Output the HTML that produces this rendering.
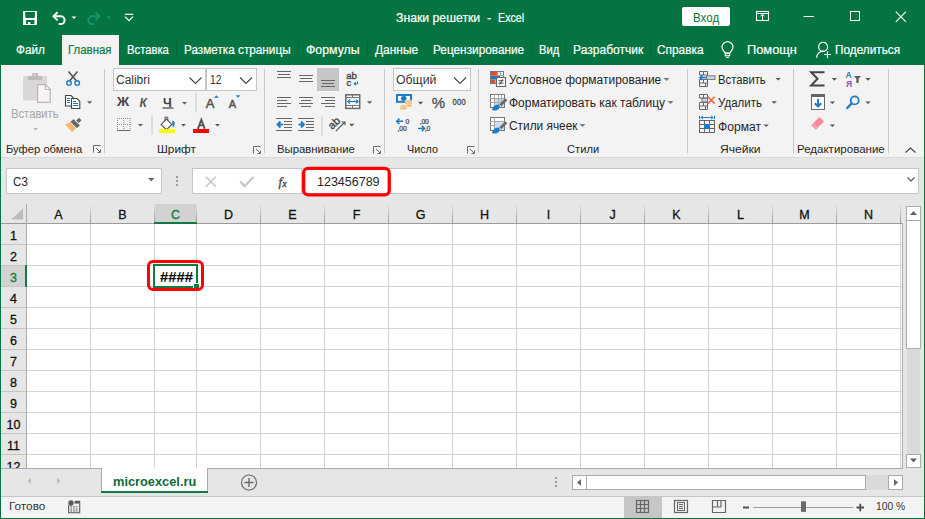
<!DOCTYPE html>
<html><head><meta charset="utf-8">
<style>
*{box-sizing:border-box}
html,body{margin:0;padding:0;width:925px;height:519px;overflow:hidden;background:#e6e6e6;font-family:"Liberation Sans",sans-serif}
.a{position:absolute}
.t{position:absolute;white-space:nowrap;line-height:20px;height:20px;transform-origin:0 0}
.w{-webkit-text-stroke:0.2px currentColor}
svg{position:absolute;overflow:visible}
.sep{position:absolute;width:1px;background:#c8c8c8}
.dd{position:absolute;width:0;height:0;border-left:3px solid transparent;border-right:3px solid transparent;border-top:3px solid #5a5a5a}
.launch{position:absolute;width:8px;height:8px}
.vl{position:absolute;top:224px;width:1px;height:244px;background:#d4d4d4}
.hl{position:absolute;left:27px;width:875px;height:1px;background:#d4d4d4}
.rn{position:absolute;left:1px;width:25px;text-align:center;font-size:12.5px;line-height:20px;color:#111;-webkit-text-stroke:0.3px currentColor}
.cn{position:absolute;top:204px;text-align:center;font-size:12.5px;line-height:20px;color:#111;-webkit-text-stroke:0.3px currentColor}
.hs{position:absolute;top:204px;width:1px;height:19px;background:linear-gradient(#e6e6e6,#b4b4b4 60%,#9b9b9b)}
</style></head><body>
<!-- green top -->
<div class="a" style="left:0;top:0;width:925px;height:65px;background:#047440"></div>
<div class="a" style="left:0;top:0;width:1px;height:519px;background:#047440"></div>
<div class="a" style="left:924px;top:0;width:1px;height:519px;background:#047440"></div>
<div class="a" style="left:0;top:518px;width:925px;height:1px;background:#047440"></div>
<!-- tab separators -->
<div class="a" style="left:176px;top:39px;width:1px;height:22px;background:#0a6a39"></div>
<div class="a" style="left:298px;top:39px;width:1px;height:22px;background:#0a6a39"></div>
<div class="a" style="left:367px;top:39px;width:1px;height:22px;background:#0a6a39"></div>
<div class="a" style="left:425px;top:39px;width:1px;height:22px;background:#0a6a39"></div>
<div class="a" style="left:531px;top:39px;width:1px;height:22px;background:#0a6a39"></div>
<div class="a" style="left:565px;top:39px;width:1px;height:22px;background:#0a6a39"></div>
<div class="a" style="left:650px;top:39px;width:1px;height:22px;background:#0a6a39"></div>
<div class="a" style="left:710px;top:39px;width:1px;height:22px;background:#0a6a39"></div>
<!-- active tab -->
<div class="a" style="left:62px;top:35px;width:57px;height:30px;background:#f3f3f3"></div>
<!-- Вход button -->
<div class="a" style="left:682px;top:7px;width:48px;height:19px;background:#fff;border-radius:2px"></div>
<!-- QAT icons -->
<svg style="left:0;top:0" width="925" height="65">
 <!-- save -->
 <path fill="#fff" fill-rule="evenodd" d="M23 11h14v14h-14z M25.2 12h9.7v4.9l-1 1h-7.7l-1-1z M26.1 20.1h8.3v3.8h-4.1v-1.9h-2.3v1.9h-1.9z"/>
 <!-- undo -->
 <path d="M53.5 16.3 h7.2 a3.9 3.9 0 0 1 0 7.8 h-2" fill="none" stroke="#fff" stroke-width="2"/>
 <path d="M57.6 12.2 l-4.1 4.1 l4.1 4.1" fill="none" stroke="#fff" stroke-width="2"/>
 <path d="M71.5 16.5h5l-2.5 2.6z" fill="#fff"/>
 <!-- redo (disabled) -->
 <path d="M99.5 16.3 h-7.2 a3.9 3.9 0 0 0 0 7.8 h2" fill="none" stroke="#16946a" stroke-width="2"/>
 <path d="M95.4 12.2 l4.1 4.1 l-4.1 4.1" fill="none" stroke="#16946a" stroke-width="2"/>
 <path d="M106.3 16.5h5l-2.5 2.6z" fill="#1a9a6a"/>
 <!-- customize -->
 <path d="M124.8 14.3h8.4" stroke="#fff" stroke-width="1.2"/>
 <path d="M125 16.6l4 4 4-4" fill="none" stroke="#fff" stroke-width="1.2"/>
 <!-- ribbon display options -->
 <rect x="756.5" y="11.5" width="12" height="9" fill="none" stroke="#fff" stroke-width="1.1"/>
 <path d="M757 13.5h11.5" stroke="#fff" stroke-width="1"/>
 <path d="M762.5 14.2v6.5M760.3 16.4l2.2-2.2 2.2 2.2" fill="none" stroke="#fff" stroke-width="1"/>
 <!-- minimize -->
 <path d="M803.5 16.5h10.5" stroke="#fff" stroke-width="1"/>
 <!-- maximize -->
 <rect x="850.5" y="11.5" width="9" height="9" fill="none" stroke="#fff" stroke-width="1.05"/>
 <!-- close -->
 <path d="M895.8 11.6l10.2 10.2M906 11.6l-10.2 10.2" stroke="#fff" stroke-width="1.05"/>
 <!-- lightbulb -->
 <g fill="none" stroke="#fff" stroke-width="1.2">
  <path d="M725.3 53.2L722.9 49.8A5.35 5.35 0 1 1 732.1 49.8L729.7 53.2z"/>
  <rect x="725.3" y="53.4" width="4.4" height="2.3"/>
  <path d="M726 57.5h3"/>
 </g>
 <!-- share person -->
 <g fill="none" stroke="#fff" stroke-width="1.2">
  <circle cx="823.1" cy="46.8" r="4.5"/>
  <path d="M816.6 57.8c0-3.8 3-6.6 6.5-6.6h2"/>
  <path d="M824.1 54.5h6.8M827.5 51.2v6.7"/>
 </g>
</svg>
<!-- ribbon -->
<div class="a" style="left:1px;top:65px;width:923px;height:92px;background:#f3f3f3"></div>
<div class="a" style="left:1px;top:157px;width:923px;height:1px;background:#d9d9d9"></div>
<!-- group separators -->
<div class="sep" style="left:104px;top:69px;height:84px"></div>
<div class="sep" style="left:264px;top:69px;height:84px"></div>
<div class="sep" style="left:384px;top:69px;height:84px"></div>
<div class="sep" style="left:478px;top:69px;height:84px"></div>
<div class="sep" style="left:687px;top:69px;height:84px"></div>
<div class="sep" style="left:793px;top:69px;height:84px"></div>
<div class="sep" style="left:888px;top:69px;height:84px"></div>
<!-- font combos -->
<div class="a" style="left:113px;top:68px;width:93px;height:23px;background:#fff;border:1px solid #c6c6c6"></div>
<div class="a" style="left:206px;top:68px;width:51px;height:23px;background:#fff;border:1px solid #c6c6c6"></div>
<div class="a" style="left:393px;top:68px;width:78px;height:23px;background:#fff;border:1px solid #c6c6c6"></div>
<!-- bottom-align selected -->
<div class="a" style="left:317px;top:68px;width:22px;height:23px;background:#c6c6c6"></div>
<div class="a" style="left:624px;top:497px;width:38px;height:21px;background:#c6c6c6"></div>
<svg style="left:0;top:0" width="925" height="160" id="ribbon">
 <!-- ===== Clipboard ===== -->
 <!-- paste -->
 <g>
  <rect x="23" y="76" width="24" height="24.5" rx="2" fill="#d9d5d9"/>
  <rect x="28" y="76" width="14" height="4" rx="0.5" fill="#bdb8bd"/>
  <path d="M32.3 73h5.7v3.5h-5.7z" fill="#bdb8bd"/>
  <rect x="34" y="74.2" width="2.2" height="1.5" fill="#d9d5d9"/>
  <path d="M37.6 84.6h8l4.6 4.6v13.2h-12.6z" fill="#f7f3f7" stroke="#b9b5b9" stroke-width="1.2"/>
  <path d="M45.3 84.6v4.9h4.9" fill="none" stroke="#b9b5b9" stroke-width="1.1"/>
 </g>
 <path d="M33 128h5.2l-2.6 2.6z" fill="#b8b8b8"/>
 <!-- cut -->
 <g fill="none">
  <path d="M68.5 71.5l8 9.5M77.5 71.5l-8 9.5" stroke="#555" stroke-width="1.6"/>
  <circle cx="69" cy="83.1" r="2.3" stroke="#1e7bc4" stroke-width="1.4"/>
  <circle cx="77.2" cy="83.1" r="2.3" stroke="#1e7bc4" stroke-width="1.4"/>
 </g>
 <!-- copy -->
 <g stroke="#444" stroke-width="1.1">
  <path d="M65.5 95.5h5.5l2.5 2.5v8h-8z" fill="#fff"/>
  <path d="M71.5 98.5h5.5l2.8 2.8v7.2h-8.3z" fill="#fff"/>
 </g>
 <path d="M67 98.5h3M67 100.5h3M67 102.5h3M73 101.5h3M73 103.5h5M73 105.5h5" stroke="#1e7bc4" stroke-width="1"/>
 <path d="M87 101.2h5.2l-2.6 2.6z" fill="#555"/>
 <!-- format painter -->
 <path d="M65 124.6L70.2 122.3 75.9 128 72.3 132.2z" fill="#f4b76f"/>
 <path d="M70.8 121.8L73.5 119.4 79.6 125.4 76.9 127.8z" fill="#666" stroke="#666" stroke-width="0.6" stroke-linejoin="round"/>
 <path d="M76.6 120.6L79 117.9 81.3 120.2 78.7 122.7z" fill="#666" stroke="#666" stroke-width="0.5" stroke-linejoin="round"/>
 <!-- launcher -->
 <g fill="none" stroke="#6a6a6a" stroke-width="1">
  <path d="M93.5 152.5v-7h7"/>
  <path d="M96 148l4 4M100.5 149.5v3h-3"/>
 </g>
 <!-- ===== Font ===== -->
 <path d="M189.5 77.5l6 6 6-6" fill="none" stroke="#444" stroke-width="1.1"/>
 <path d="M240 77.5l6 6 6-6" fill="none" stroke="#444" stroke-width="1.1"/>
 <text x="117" y="106.5" font-family="Liberation Sans" font-weight="bold" font-size="12" fill="#444" transform="translate(117 106.5) scale(1.12 1) translate(-117 -106.5)">Ж</text>
 <text x="139.6" y="106.5" font-family="Liberation Sans" font-weight="bold" font-style="italic" font-size="12" fill="#555">К</text>
 <text x="163" y="106.5" font-family="Liberation Sans" font-weight="bold" font-size="12.5" fill="#404040">Ч</text>
 <path d="M162.5 108h11" stroke="#404040" stroke-width="1.2"/>
 <path d="M182 102h5l-2.5 2.5z" fill="#5a5a5a"/>
 <rect x="195.5" y="92.5" width="1" height="20" fill="#c8c8c8"/>
 <text x="205.8" y="108" font-family="Liberation Sans" font-size="13" fill="#555" stroke="#555" stroke-width="0.5">A</text>
 <path d="M213.8 97.8l2.5-2.6 2.5 2.6z" fill="#2a7cc7"/>
 <text x="228.8" y="108" font-family="Liberation Sans" font-size="11" fill="#555" stroke="#555" stroke-width="0.5">A</text>
 <path d="M235.5 95.2h5l-2.5 2.6z" fill="#2a7cc7"/>
 <!-- borders -->
 <g fill="#6a6a6a">
  <path d="M117 130h13.5v1h-13.5z"/>
 </g>
 <g fill="none" stroke="#8a8a8a" stroke-width="1" stroke-dasharray="1 1">
  <path d="M117.5 118v12M130 118v12M117 118.5h13M117 124.5h13M123.7 118v12"/>
 </g>
 <path d="M138 124h5l-2.5 2.5z" fill="#5a5a5a"/>
 <rect x="151.5" y="115" width="1" height="20" fill="#c8c8c8"/>
 <!-- fill color -->
 <path d="M161.2 124.4l5.3-5.3 5.3 5.3-5.3 5.3z" fill="#fff" stroke="#555" stroke-width="1.1"/>
 <path d="M165 121.3v-4.2h2.8v3.8" fill="none" stroke="#555" stroke-width="1"/>
 <path d="M172.3 120.5c1.9 0.2 2.9 2 2.3 4-0.3 1.1-0.9 2.1-1.6 3.3-0.4-1.6-0.8-3.2-0.7-7.3z" fill="#1e7bc4"/>
 <rect x="159" y="129" width="16" height="4" fill="#ffff00"/>
 <path d="M181 124h5l-2.5 2.5z" fill="#5a5a5a"/>
 <!-- font color -->
 <path d="M197.9 128.8L201.35 119.7 204.8 128.8M199.1 125.4h4.5" fill="none" stroke="#555" stroke-width="1.9"/>
 <rect x="193" y="129" width="16" height="4" fill="#ff0000"/>
 <path d="M215 124h5l-2.5 2.5z" fill="#5a5a5a"/>
 <g fill="none" stroke="#6a6a6a" stroke-width="1">
  <path d="M253.5 153.5v-7h7"/>
  <path d="M256 149l4 4M260.5 150.5v3h-3"/>
 </g>
 <!-- ===== Alignment ===== -->
 <g stroke="#666" stroke-width="1.1">
  <path d="M277 71.5h14M278 74.5h12M277 77.5h14"/>
  <path d="M299 75.5h14M300 78.5h12M299 81.5h14"/>
  <path d="M321 80.5h14M322 83.5h12M321 86.5h14"/>
  <path d="M277 97.5h14M277 100.5h10M277 103.5h14M277 106.5h10"/>
  <path d="M299 97.5h14M301 100.5h10M299 103.5h14M301 106.5h10"/>
  <path d="M321 97.5h14M325 100.5h10M321 103.5h14M325 106.5h10"/>
  <path d="M276 118.5h16M284 121.5h8M284 124.5h8M284 127.5h8M276 130.5h16"/>
  <path d="M298 118.5h16M306 121.5h8M306 124.5h8M306 127.5h8M298 130.5h16"/>
 </g>
 <path d="M277.5 124.5h5.5M280.5 121.5l-3 3 3 3" fill="none" stroke="#1e7bc4" stroke-width="1.8"/>
 <path d="M298.5 124.5h5.5M301 121.5l3 3-3 3" fill="none" stroke="#1e7bc4" stroke-width="1.8"/>
 <text x="346.3" y="78.8" font-family="Liberation Sans" font-size="9.5" fill="#444" stroke="#444" stroke-width="0.35" letter-spacing="-0.2">ab</text>
 <text x="346.5" y="86.2" font-family="Liberation Sans" font-size="9.5" fill="#444" stroke="#444" stroke-width="0.35">c</text>
 <path d="M357.6 81.2v2.6h-3.4M355.7 82.3l-1.5 1.5 1.5 1.5" fill="none" stroke="#1e7bc4" stroke-width="1.1"/>
 <!-- merge -->
 <rect x="345.8" y="94.8" width="13.9" height="13.6" fill="#fff" stroke="#666" stroke-width="1.5"/>
 <path d="M345.8 97.5h13.9M345.8 105.5h13.9M352.5 94.8v2.7M352.5 105.5v2.9" stroke="#777" stroke-width="1"/>
 <path d="M348 101.5h10" stroke="#1e7bc4" stroke-width="1.2"/>
 <path d="M350 99.3l-2.2 2.2 2.2 2.2M356 99.3l2.2 2.2-2.2 2.2" fill="none" stroke="#1e7bc4" stroke-width="1.2"/>
 <path d="M367 101.2h5.2l-2.6 2.6z" fill="#555"/>
 <rect x="321.5" y="115.5" width="1" height="20" fill="#c8c8c8"/>
 <!-- orientation -->
 <text x="0" y="0" font-family="Liberation Sans" font-size="11" fill="#444" stroke="#444" stroke-width="0.35" transform="translate(332.3 130) rotate(-45)">ab</text>
 <path d="M335.8 131.2l9.2-9.2M341.8 122h3.2v3.2" fill="none" stroke="#555" stroke-width="1.1"/>
 <path d="M349.2 123.8h5.2l-2.6 2.6z" fill="#555"/>
 <g fill="none" stroke="#6a6a6a" stroke-width="1">
  <path d="M373.5 153.5v-7h7"/>
  <path d="M376 149l4 4M380.5 150.5v3h-3"/>
 </g>
 <!-- ===== Number ===== -->
 <path d="M454 77.5l6 6 6-6" fill="none" stroke="#444" stroke-width="1.1"/>
 <!-- currency -->
 <rect x="396" y="94" width="16" height="8.8" fill="#1e7bc4"/>
 <rect x="398" y="96" width="12" height="4.8" fill="#fff"/>
 <path d="M404 96.2a2.4 2.4 0 1 0 0.1 4.6z" fill="#1e7bc4"/>
 <circle cx="404.3" cy="98.4" r="2.3" fill="#1e7bc4"/>
 <g fill="#f4b76f" stroke="#f3f3f3" stroke-width="0.6">
  <ellipse cx="408.6" cy="101.6" rx="3.6" ry="1.5"/>
  <ellipse cx="408.6" cy="103.6" rx="3.6" ry="1.5"/>
  <ellipse cx="408.6" cy="105.6" rx="3.6" ry="1.5"/>
  <ellipse cx="403.5" cy="106.2" rx="3.6" ry="1.5"/>
  <ellipse cx="403.5" cy="108.3" rx="3.6" ry="1.5"/>
 </g>
 <path d="M418 101.8h5.2l-2.6 2.6z" fill="#555"/>
 <text x="431.8" y="108" font-family="Liberation Sans" font-size="15" fill="#505050" stroke="#505050" stroke-width="0.3">%</text>
 <text x="0" y="0" transform="translate(452.6 104.8) scale(0.82 1)" font-family="Liberation Sans" font-size="9.2" fill="#404040" stroke="#404040" stroke-width="0.3" letter-spacing="0.3">000</text>
 <text x="0" y="0" transform="translate(405.6 123.6) scale(0.85 1)" font-family="Liberation Sans" font-size="8" fill="#404040" stroke="#404040" stroke-width="0.25">0</text>
 <text x="0" y="0" transform="translate(397.6 131) scale(0.85 1)" font-family="Liberation Sans" font-size="8" fill="#404040" stroke="#404040" stroke-width="0.25" letter-spacing="-0.2">,00</text>
 <path d="M396.5 121.3h6.5M399.5 118.6l-2.8 2.7 2.8 2.7" fill="none" stroke="#1e7bc4" stroke-width="1.5"/>
 <text x="0" y="0" transform="translate(419.8 124) scale(0.85 1)" font-family="Liberation Sans" font-size="8" fill="#404040" stroke="#404040" stroke-width="0.25" letter-spacing="-0.2">,00</text>
 <text x="0" y="0" transform="translate(424.8 131) scale(0.85 1)" font-family="Liberation Sans" font-size="8" fill="#404040" stroke="#404040" stroke-width="0.25" letter-spacing="-0.2">,0</text>
 <path d="M418 128.6h6.5M421.8 125.9l2.8 2.7-2.8 2.7" fill="none" stroke="#1e7bc4" stroke-width="1.5"/>
 <g fill="none" stroke="#6a6a6a" stroke-width="1">
  <path d="M467.5 153.5v-7h7"/>
  <path d="M470 149l4 4M474.5 150.5v3h-3"/>
 </g>
 <!-- ===== Styles ===== -->
 <!-- conditional formatting -->
 <rect x="490.5" y="71.5" width="13" height="12" fill="#fff" stroke="#777" stroke-width="1"/>
 <path d="M490.5 75.5h13M490.5 79.5h13M497.5 71.5v4M500.5 71.5v4" stroke="#aaa" stroke-width="1"/>
 <rect x="491" y="72" width="6" height="3.5" fill="#ea4a2a"/>
 <rect x="491" y="76" width="9" height="3.4" fill="#1e7bc4"/>
 <rect x="491" y="80" width="4.5" height="3" fill="#ea4a2a"/>
 <rect x="496.5" y="77.5" width="9" height="9" fill="#fff" stroke="#666" stroke-width="1.1"/>
 <path d="M498.5 80.8h5M498.5 83.2h5M502.6 79.2l-3 5.6" stroke="#333" stroke-width="0.9"/>
 <!-- format as table -->
 <rect x="490.5" y="94.5" width="14" height="13" fill="#fff" stroke="#777" stroke-width="1"/>
 <rect x="495" y="99" width="9" height="8" fill="#c9ddf0"/>
 <path d="M490.5 98.5h14M490.5 102.5h14M494.5 94.5v13M498.5 94.5v13M501.5 94.5v13" stroke="#aaa" stroke-width="1"/>
 <path d="M499.3 104.2l6-6 2 2-6 6z" fill="#6a6a6a"/>
 <path d="M492 110c0.5-2.5 2.5-5.5 6.5-5.5l1.2 1.2c0 4-3 6-7.7 4.3z" fill="#1e7bc4"/>
 <!-- cell styles -->
 <rect x="490.5" y="117.5" width="14" height="13" fill="#fff" stroke="#777" stroke-width="1"/>
 <rect x="495" y="122" width="9" height="8" fill="#c9ddf0"/>
 <path d="M490.5 121.5h14M494.5 117.5v13M490.5 125.5h4" stroke="#aaa" stroke-width="1"/>
 <path d="M499.3 127.2l6-6 2 2-6 6z" fill="#6a6a6a"/>
 <path d="M492 133c0.5-2.5 2.5-5.5 6.5-5.5l1.2 1.2c0 4-3 6-7.7 4.3z" fill="#1e7bc4"/>
 <path d="M663.5 78h6l-3 3z" fill="#7a7a7a"/>
 <path d="M667.5 101h6l-3 3z" fill="#7a7a7a"/>
 <path d="M579.5 124h6l-3 3z" fill="#7a7a7a"/>
 <!-- ===== Cells ===== -->
 <g fill="none" stroke="#666" stroke-width="1">
  <path d="M699.5 71.5h8v3.5h-8zM703.5 71.5v3.5"/>
  <path d="M699.5 79.5h8v7h-8zM699.5 83h8M703.5 79.5v3.5M705.5 83v3.5"/>
 </g>
 <rect x="706.5" y="75.8" width="8.5" height="3.6" fill="#c5dcf0" stroke="#777" stroke-width="1"/>
 <path d="M706 77.6h-6M702.4 75.2l-2.4 2.4 2.4 2.4" fill="none" stroke="#1e7bc4" stroke-width="1.5"/>
 <path d="M775.5 78h5.3l-2.65 2.6z" fill="#555"/>
 <!-- delete -->
 <g fill="none" stroke="#666" stroke-width="1">
  <path d="M699.5 94.5h8v3.5h-8zM703.5 94.5v3.5"/>
  <path d="M699.5 102.5h8v7h-8zM699.5 106h8M703.5 102.5v3.5M705.5 106v3.5"/>
 </g>
 <rect x="702" y="98.3" width="5.5" height="3.6" fill="#c5dcf0" stroke="#777" stroke-width="1"/>
 <path d="M707.8 96.8l6.8 6.8M714.6 96.8l-6.8 6.8" stroke="#ec6a4a" stroke-width="1.6"/>
 <path d="M771.5 101.2h5.3l-2.65 2.6z" fill="#555"/>
 <!-- format -->
 <g fill="none" stroke="#666" stroke-width="1">
  <rect x="699.5" y="120.5" width="15" height="12"/>
  <path d="M699.5 124.5h15M699.5 128.5h15M704.5 120.5v12M709.5 120.5v12"/>
 </g>
 <rect x="704" y="124" width="6" height="5" fill="#1e7bc4"/>
 <path d="M700.5 117.5h13" stroke="#1e7bc4" stroke-width="1"/>
 <path d="M699.5 115.8v3.4M714.5 115.8v3.4" stroke="#1e7bc4" stroke-width="1"/>
 <path d="M703 115.8l-2 1.7 2 1.7M711 115.8l2 1.7-2 1.7" fill="none" stroke="#1e7bc4" stroke-width="1"/>
 <path d="M763.5 124.5h5.3l-2.65 2.6z" fill="#555"/>
 <!-- ===== Editing ===== -->
 <path d="M824.5 72.2h-13.3l6.3 6.6-6.3 6.6h13.3" fill="none" stroke="#444" stroke-width="2"/>
 <path d="M831.7 78.1h5.3l-2.65 2.6z" fill="#555"/>
 <text x="845.6" y="77.9" font-family="Liberation Sans" font-weight="bold" font-size="8.5" fill="#1e7bc4">A</text>
 <text x="846" y="86.9" font-family="Liberation Sans" font-weight="bold" font-size="8.5" fill="#8b4fb3">Я</text>
 <path d="M854 76.1h7l-2.4 2.6v4.2h-2.2v-4.2z" fill="#5a5a5a"/>
 <path d="M865.3 78.1h5.3l-2.65 2.6z" fill="#555"/>
 <!-- fill -->
 <rect x="811.5" y="94.5" width="13" height="15" fill="#fff" stroke="#666" stroke-width="1"/>
 <rect x="811" y="94" width="14" height="3" fill="#666"/>
 <path d="M818 99v7M814.8 103.3l3.2 3.2 3.2-3.2" fill="none" stroke="#1e7bc4" stroke-width="2"/>
 <path d="M829.7 101.5h5.3l-2.65 2.6z" fill="#555"/>
 <!-- find -->
 <circle cx="854.7" cy="100.4" r="4" fill="none" stroke="#1e7bc4" stroke-width="1.8"/>
 <path d="M851.8 103.4l-4.6 4.6" stroke="#1e7bc4" stroke-width="2.4" stroke-linecap="round"/>
 <path d="M865.3 101.5h5.3l-2.65 2.6z" fill="#555"/>
 <!-- clear -->
 <path d="M815.8 129.8l-4.6-4.6 8.2-8.2 4.6 4.6z" fill="#f7899b"/>
 <path d="M815.8 129.8l-4.6-4.6 2.4-2.4 4.6 4.6z" fill="#f5a2b0"/>
 <path d="M829.7 124.5h5.3l-2.65 2.6z" fill="#555"/>
 <!-- collapse caret -->
 <path d="M905.5 152.5l5-4.5 5 4.5" fill="none" stroke="#444" stroke-width="1.1"/>
</svg>
<!-- ===== Formula bar ===== -->
<div class="a" style="left:6px;top:168px;width:156px;height:26px;background:#fff;border:1px solid #c6c6c6"></div>
<div class="a" style="left:192px;top:168px;width:727px;height:26px;background:#fff;border:1px solid #c6c6c6"></div>
<svg style="left:0;top:0" width="925" height="200">
 <path d="M148 178h6.5l-3.25 3.5z" fill="#6a6a6a"/>
 <path d="M176 176h2v2h-2zM176 180h2v2h-2zM176 184h2v2h-2z" fill="#9a9a9a"/>
 <path d="M205.8 176.8l10 10M215.8 176.8l-10 10" stroke="#c6c6c6" stroke-width="1.6"/>
 <path d="M240.3 181.6l4.3 4.6 8.8-9.2" fill="none" stroke="#c6c6c6" stroke-width="2.2"/>
 <text x="278.5" y="186" font-family="Liberation Serif" font-style="italic" font-size="13" fill="#404040" stroke="#404040" stroke-width="0.3">f</text>
 <text x="282.3" y="186.5" font-family="Liberation Serif" font-style="italic" font-size="10" fill="#404040" stroke="#404040" stroke-width="0.3">x</text>
 <path d="M907.5 177.5l3.5 3.5 3.5-3.5" fill="none" stroke="#6a6a6a" stroke-width="1.5"/>
 <path d="M301.5 168v26" stroke="#c6c6c6" stroke-width="1"/>
 <rect x="303.65" y="168.45" width="85.6" height="26.4" rx="4.5" fill="none" stroke="#ff0000" stroke-width="3.3"/>
</svg>
<!-- ===== Grid ===== -->
<div class="a" style="left:27px;top:224px;width:875px;height:244px;background:#fff"></div>
<!-- headers -->
<div class="a" style="left:155px;top:204px;width:41px;height:19px;background:#d2d2d2"></div>
<div class="a" style="left:1px;top:266px;width:25px;height:20px;background:#d2d2d2"></div>
<div class="a" style="left:1px;top:223px;width:902px;height:1px;background:#9b9b9b"></div>
<div class="a" style="left:26px;top:204px;width:1px;height:264px;background:#ababab"></div>
<div class="a" style="left:902px;top:223px;width:1px;height:245px;background:#ababab"></div>
<svg style="left:0;top:0" width="30" height="230"><path d="M11 219.5h12v-11z" fill="#bdbdbd"/></svg>
<div class="vl" style="left:90px"></div>
<div class="hs" style="left:90px"></div>
<div class="vl" style="left:154px"></div>
<div class="hs" style="left:154px"></div>
<div class="vl" style="left:196px"></div>
<div class="hs" style="left:196px"></div>
<div class="vl" style="left:260px"></div>
<div class="hs" style="left:260px"></div>
<div class="vl" style="left:324px"></div>
<div class="hs" style="left:324px"></div>
<div class="vl" style="left:388px"></div>
<div class="hs" style="left:388px"></div>
<div class="vl" style="left:452px"></div>
<div class="hs" style="left:452px"></div>
<div class="vl" style="left:516px"></div>
<div class="hs" style="left:516px"></div>
<div class="vl" style="left:580px"></div>
<div class="hs" style="left:580px"></div>
<div class="vl" style="left:644px"></div>
<div class="hs" style="left:644px"></div>
<div class="vl" style="left:708px"></div>
<div class="hs" style="left:708px"></div>
<div class="vl" style="left:772px"></div>
<div class="hs" style="left:772px"></div>
<div class="vl" style="left:836px"></div>
<div class="hs" style="left:836px"></div>
<div class="vl" style="left:900px"></div>
<div class="hs" style="left:900px"></div>
<div class="hl" style="top:244px"></div>
<div class="a" style="left:1px;top:244px;width:25px;height:1px;background:#c6c6c6"></div>
<div class="hl" style="top:265px"></div>
<div class="a" style="left:1px;top:265px;width:25px;height:1px;background:#c6c6c6"></div>
<div class="hl" style="top:286px"></div>
<div class="a" style="left:1px;top:286px;width:25px;height:1px;background:#c6c6c6"></div>
<div class="hl" style="top:307px"></div>
<div class="a" style="left:1px;top:307px;width:25px;height:1px;background:#c6c6c6"></div>
<div class="hl" style="top:328px"></div>
<div class="a" style="left:1px;top:328px;width:25px;height:1px;background:#c6c6c6"></div>
<div class="hl" style="top:349px"></div>
<div class="a" style="left:1px;top:349px;width:25px;height:1px;background:#c6c6c6"></div>
<div class="hl" style="top:370px"></div>
<div class="a" style="left:1px;top:370px;width:25px;height:1px;background:#c6c6c6"></div>
<div class="hl" style="top:391px"></div>
<div class="a" style="left:1px;top:391px;width:25px;height:1px;background:#c6c6c6"></div>
<div class="hl" style="top:412px"></div>
<div class="a" style="left:1px;top:412px;width:25px;height:1px;background:#c6c6c6"></div>
<div class="hl" style="top:433px"></div>
<div class="a" style="left:1px;top:433px;width:25px;height:1px;background:#c6c6c6"></div>
<div class="hl" style="top:454px"></div>
<div class="a" style="left:1px;top:454px;width:25px;height:1px;background:#c6c6c6"></div>
<div class="cn" style="left:27px;width:63px;top:205px;color:#111">A</div>
<div class="cn" style="left:91px;width:63px;top:205px;color:#111">B</div>
<div class="cn" style="left:155px;width:41px;top:205px;color:#107c41">C</div>
<div class="cn" style="left:197px;width:63px;top:205px;color:#111">D</div>
<div class="cn" style="left:261px;width:63px;top:205px;color:#111">E</div>
<div class="cn" style="left:325px;width:63px;top:205px;color:#111">F</div>
<div class="cn" style="left:389px;width:63px;top:205px;color:#111">G</div>
<div class="cn" style="left:453px;width:63px;top:205px;color:#111">H</div>
<div class="cn" style="left:517px;width:63px;top:205px;color:#111">I</div>
<div class="cn" style="left:581px;width:63px;top:205px;color:#111">J</div>
<div class="cn" style="left:645px;width:63px;top:205px;color:#111">K</div>
<div class="cn" style="left:709px;width:63px;top:205px;color:#111">L</div>
<div class="cn" style="left:773px;width:63px;top:205px;color:#111">M</div>
<div class="cn" style="left:837px;width:63px;top:205px;color:#111">N</div>
<div class="rn" style="top:226px;color:#111">1</div>
<div class="rn" style="top:247px;color:#111">2</div>
<div class="rn" style="top:268px;color:#107c41">3</div>
<div class="rn" style="top:289px;color:#111">4</div>
<div class="rn" style="top:310px;color:#111">5</div>
<div class="rn" style="top:331px;color:#111">6</div>
<div class="rn" style="top:352px;color:#111">7</div>
<div class="rn" style="top:373px;color:#111">8</div>
<div class="rn" style="top:394px;color:#111">9</div>
<div class="rn" style="top:415px;color:#111">10</div>
<div class="rn" style="top:436px;color:#111">11</div>
<div class="rn" style="top:457px;color:#111">12</div>
<div class="a" style="left:154px;top:222px;width:43px;height:2px;background:#107c41"></div>
<div class="a" style="left:25px;top:265px;width:2px;height:22px;background:#107c41"></div>
<!-- selection -->
<div class="a" style="left:153px;top:264px;width:45px;height:24px;border:2px solid #107c41"></div>
<div class="a" style="left:193px;top:283px;width:6px;height:6px;background:#107c41;border-left:1px solid #fff;border-top:1px solid #fff"></div>
<div class="a" style="left:147px;top:260px;width:57px;height:31px;border:3px solid #ff0000;border-radius:6px"></div>
<!-- vertical scrollbar -->
<div class="a" style="left:906px;top:206px;width:15px;height:15px;background:#fff;border:1px solid #ababab"></div>
<div class="a" style="left:906px;top:221px;width:15px;height:233px;background:#dadada;border-left:1px solid #e6e6e6;border-right:1px solid #e6e6e6"></div>
<div class="a" style="left:906px;top:220px;width:15px;height:129px;background:#fff;border:1px solid #ababab"></div>
<div class="a" style="left:906px;top:454px;width:15px;height:14px;background:#fff;border:1px solid #ababab"></div>
<svg style="left:0;top:0" width="925" height="519">
 <path d="M910 215h7l-3.5-4z" fill="#606060"/>
 <path d="M910 458.5h7l-3.5 4z" fill="#606060"/>
</svg>
<!-- sheet bar -->
<div class="a" style="left:1px;top:468px;width:923px;height:28px;background:#e6e6e6"></div>
<div class="a" style="left:1px;top:468px;width:101px;height:1px;background:#ababab"></div>
<div class="a" style="left:207px;top:468px;width:696px;height:1px;background:#ababab"></div>
<div class="a" style="left:101px;top:468px;width:107px;height:25px;background:#fff;border-left:1px solid #ababab;border-right:1px solid #ababab"></div>
<div class="a" style="left:101px;top:491px;width:107px;height:2px;background:#107c41"></div>
<div class="a" style="left:1px;top:496px;width:923px;height:1px;background:#c6c6c6"></div>
<div class="a" style="left:1px;top:497px;width:923px;height:21px;background:#f3f3f3"></div>
<div class="a" style="left:624px;top:497px;width:38px;height:21px;background:#c6c6c6"></div>
<svg style="left:0;top:0" width="925" height="519">
 <path d="M31 477.5v7l-3.5-3.5z" fill="#c0c0c0"/>
 <path d="M57 477.5v7l3.5-3.5z" fill="#c0c0c0"/>
 <circle cx="249" cy="482.5" r="7.5" fill="none" stroke="#6a6a6a" stroke-width="1.2"/>
 <path d="M244.5 482.5h9M249 478v9" stroke="#6a6a6a" stroke-width="1.4"/>
 <path d="M555 477h2v2h-2zM555 481h2v2h-2zM555 485h2v2h-2z" fill="#9a9a9a"/>
 <!-- macro icon -->
 <circle cx="71" cy="503" r="2.7" fill="#5a5a5a"/>
 <rect x="74.6" y="500.8" width="5.6" height="2.8" fill="#5a5a5a"/>
 <path d="M68.6 505v7.8h11.1v-9.2" fill="none" stroke="#5a5a5a" stroke-width="1.1"/>
 <path d="M70.3 506.8h8.2M70.3 509h8.2M70.3 511h8.2" stroke="#5a5a5a" stroke-width="1" stroke-dasharray="1.8 0.9"/>
 <!-- view icons -->
 <g fill="none" stroke="#666" stroke-width="1.2">
  <rect x="636.5" y="500.5" width="12" height="12"/>
  <path d="M640.5 500.5v12M644.5 500.5v12M636.5 504.5h12M636.5 508.5h12"/>
  <rect x="674.5" y="500.5" width="13" height="12"/>
 </g>
 <g fill="none" stroke="#666" stroke-width="1">
  <rect x="677.5" y="502.5" width="7" height="8"/>
  <path d="M679 504.5h4M679 506.5h4M679 508.5h4"/>
 </g>
 <g fill="none" stroke="#666" stroke-width="1.2">
  <path d="M712.5 500.5h13v12h-13zM717.5 500.5v6.5M721 500.5v6.5M712.5 507h8.5"/>
 </g>
 <path d="M743 507.5h6" stroke="#505050" stroke-width="2"/>
 <path d="M753 507.5h100" stroke="#a0a0a0" stroke-width="1"/>
 <rect x="801" y="501.3" width="5" height="10.6" fill="#6a6a6a"/>
 <path d="M856.5 507.5h7.5M860.25 503.7v7.6" stroke="#505050" stroke-width="1.8"/>
</svg>
<!-- horizontal scrollbar -->
<div class="a" style="left:572px;top:475px;width:331px;height:15px;background:#dadada"></div>
<div class="a" style="left:572px;top:475px;width:16px;height:15px;background:#fff;border:1px solid #ababab"></div>
<div class="a" style="left:586px;top:475px;width:280px;height:15px;background:#fff;border:1px solid #ababab"></div>
<div class="a" style="left:888px;top:475px;width:15px;height:15px;background:#fff;border:1px solid #ababab"></div>
<svg style="left:0;top:0" width="925" height="519">
 <path d="M581 479v7l-4-3.5z" fill="#666"/>
 <path d="M894 479v7l4-3.5z" fill="#666"/>
</svg>
<div class="t w" id=t0 style="left:396.3px;top:8px;font-size:12.5px;color:#ffffff;font-weight:normal;transform:scaleX(0.9795);">Знаки решетки</div>
<div class="t w" id=t1 style="left:487.1px;top:8px;font-size:12.5px;color:#ffffff;font-weight:normal;transform:scaleX(1.0267);">-</div>
<div class="t w" id=t2 style="left:498.2px;top:8px;font-size:12.5px;color:#ffffff;font-weight:normal;transform:scaleX(0.8558);">Excel</div>
<div class="t" id=t3 style="left:692.9px;top:8px;font-size:12.5px;color:#047440;font-weight:normal;transform:scaleX(0.9249);">Вход</div>
<div class="t w" id=t4 style="left:15.9px;top:40px;font-size:12.5px;color:#ffffff;font-weight:normal;transform:scaleX(0.9429);">Файл</div>
<div class="t w" id=t5 style="left:126.9px;top:40px;font-size:12.5px;color:#ffffff;font-weight:normal;transform:scaleX(0.9001);">Вставка</div>
<div class="t w" id=t6 style="left:184.0px;top:40px;font-size:12.5px;color:#ffffff;font-weight:normal;transform:scaleX(0.9398);">Разметка страницы</div>
<div class="t w" id=t7 style="left:305.5px;top:40px;font-size:12.5px;color:#ffffff;font-weight:normal;transform:scaleX(0.9858);">Формулы</div>
<div class="t w" id=t8 style="left:374.5px;top:40px;font-size:12.5px;color:#ffffff;font-weight:normal;transform:scaleX(0.9562);">Данные</div>
<div class="t w" id=t9 style="left:432.9px;top:40px;font-size:12.5px;color:#ffffff;font-weight:normal;transform:scaleX(0.9446);">Рецензирование</div>
<div class="t w" id=t10 style="left:538.5px;top:40px;font-size:12.5px;color:#ffffff;font-weight:normal;transform:scaleX(0.8982);">Вид</div>
<div class="t w" id=t11 style="left:572.7px;top:40px;font-size:12.5px;color:#ffffff;font-weight:normal;transform:scaleX(0.9643);">Разработчик</div>
<div class="t w" id=t12 style="left:656.6px;top:40px;font-size:12.5px;color:#ffffff;font-weight:normal;transform:scaleX(0.9478);">Справка</div>
<div class="t w" id=t13 style="left:746.9px;top:40px;font-size:12.5px;color:#ffffff;font-weight:normal;transform:scaleX(1.0248);">Помощн</div>
<div class="t w" id=t14 style="left:834.5px;top:40px;font-size:12.5px;color:#ffffff;font-weight:normal;transform:scaleX(0.9427);">Поделиться</div>
<div class="t w" id=t15 style="left:67.9px;top:40px;font-size:12.5px;color:#107c41;font-weight:normal;transform:scaleX(0.9152);">Главная</div>
<div class="t" id=t16 style="left:6.2px;top:139px;font-size:11.5px;color:#262626;font-weight:normal;transform:scaleX(0.9746);">Буфер обмена</div>
<div class="t" id=t17 style="left:157.2px;top:139px;font-size:11.5px;color:#262626;font-weight:normal;transform:scaleX(1.0274);">Шрифт</div>
<div class="t" id=t18 style="left:277.2px;top:139px;font-size:11.5px;color:#262626;font-weight:normal;transform:scaleX(0.9831);">Выравнивание</div>
<div class="t" id=t19 style="left:407.2px;top:139px;font-size:11.5px;color:#262626;font-weight:normal;transform:scaleX(0.9365);">Число</div>
<div class="t" id=t20 style="left:566.5px;top:139px;font-size:11.5px;color:#262626;font-weight:normal;transform:scaleX(0.9690);">Стили</div>
<div class="t" id=t21 style="left:719.5px;top:139px;font-size:11.5px;color:#262626;font-weight:normal;transform:scaleX(1.0500);">Ячейки</div>
<div class="t" id=t22 style="left:796.7px;top:139px;font-size:11.5px;color:#262626;font-weight:normal;transform:scaleX(1.0016);">Редактирование</div>
<div class="t" id=t23 style="left:11.1px;top:104px;font-size:12px;color:#a6a6a6;font-weight:normal;transform:scaleX(0.9361);">Вставить</div>
<div class="t" id=t24 style="left:116.0px;top:70px;font-size:12.5px;color:#333;font-weight:normal;transform:scaleX(0.9565);">Calibri</div>
<div class="t" id=t25 style="left:209.5px;top:70px;font-size:12.5px;color:#333;font-weight:normal;transform:scaleX(0.8217);">12</div>
<div class="t" id=t26 style="left:396.1px;top:70px;font-size:12.5px;color:#333;font-weight:normal;transform:scaleX(0.9827);">Общий</div>
<div class="t" id=t27 style="left:508.8px;top:70px;font-size:12px;color:#262626;font-weight:normal;transform:scaleX(0.9975);">Условное форматирование</div>
<div class="t" id=t28 style="left:508.8px;top:93px;font-size:12px;color:#262626;font-weight:normal;transform:scaleX(0.9991);">Форматировать как таблицу</div>
<div class="t" id=t29 style="left:508.8px;top:116px;font-size:12px;color:#262626;font-weight:normal;transform:scaleX(0.9888);">Стили ячеек</div>
<div class="t" id=t30 style="left:718.0px;top:70px;font-size:12px;color:#262626;font-weight:normal;transform:scaleX(0.9381);">Вставить</div>
<div class="t" id=t31 style="left:718.0px;top:93px;font-size:12px;color:#262626;font-weight:normal;transform:scaleX(0.9590);">Удалить</div>
<div class="t" id=t32 style="left:718.0px;top:117px;font-size:12px;color:#262626;font-weight:normal;transform:scaleX(1.0111);">Формат</div>
<div class="t" id=t33 style="left:12.9px;top:172px;font-size:12.5px;color:#262626;font-weight:normal;transform:scaleX(0.9298);">C3</div>
<div class="t" id=t34 style="left:317.1px;top:172px;font-size:12.5px;color:#262626;font-weight:normal;transform:scaleX(0.9995);">123456789</div>
<div class="t" id=t35 style="left:9.2px;top:496px;font-size:11px;color:#333;font-weight:normal;transform:scaleX(1.0679);">Готово</div>
<div class="t" id=t36 style="left:875.5px;top:496px;font-size:11px;color:#333;font-weight:normal;transform:scaleX(0.9335);white-space:pre;">100 %</div>
<div class="t" id=t37 style="left:112.9px;top:472px;font-size:13px;color:#0e6b3a;font-weight:bold;transform:scaleX(0.9850);">microexcel.ru</div>
<div class="t" id=t38 style="left:159.5px;top:267px;font-size:15px;color:#000;font-weight:bold;transform:scaleX(0.9914);">####</div>
</body></html>
